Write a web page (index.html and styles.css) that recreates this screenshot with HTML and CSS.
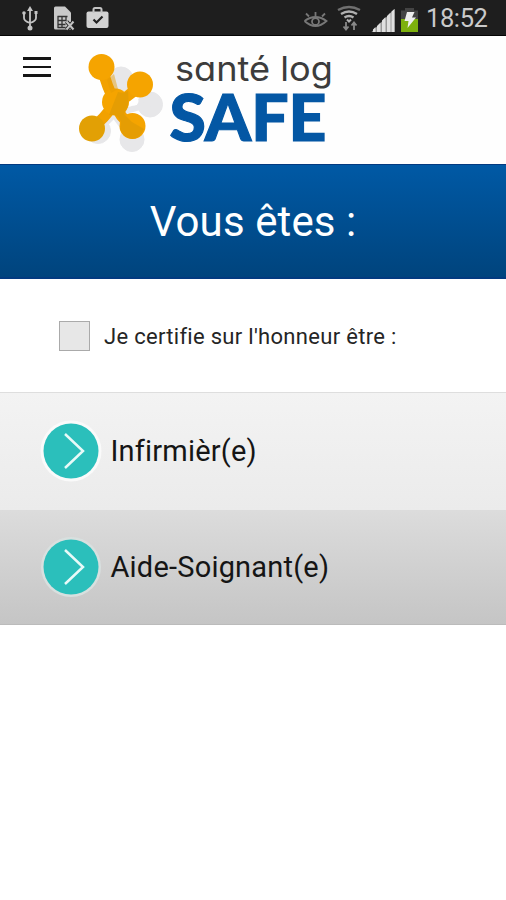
FILE: index.html
```html
<!DOCTYPE html>
<html lang="fr">
<head>
<meta charset="utf-8">
<meta name="viewport" content="width=device-width">
<title>Santé log SAFE</title>
<link rel="stylesheet" href="styles.css">
</head>
<body>
<div class="statusbar">
  <svg class="status-left" width="120" height="36" viewBox="0 0 120 36" fill="none" stroke="#c4c4c4">
    <path d="M30 9v19M24 13v5q0 3 6 5M36 13v5q0 3-6 5" stroke-width="1.8"/>
    <path d="M30 6l3 5h-6z" fill="#c4c4c4" stroke="none"/>
    <circle cx="24" cy="13" r="1.8" fill="#c4c4c4" stroke="none"/>
    <path d="M34.500 11h3v3h-3z" fill="#c4c4c4" stroke="none"/>
    <circle cx="30" cy="28" r="2.500" fill="#c4c4c4" stroke="none"/>
    <path d="M54 8q0-1.500 1.500-1.500H65l6 6V29.500H55.500q-1.500 0-1.500-1.500z" fill="#c9c9c9" stroke="none"/>
    <path d="M57.500 16.500h10M57.500 20.500h9M57.500 24.500h8M57.500 27.500h8M58 16v12M62 16v12M66 16v5" stroke="#333" stroke-width="1.300"/>
    <path d="M66.500 21.500l7 8M73.500 21.500l-7 8" stroke="#222" stroke-width="4"/>
    <path d="M66.500 21.500l7 8M73.500 21.500l-7 8" stroke-width="2"/>
    <rect x="86.500" y="11.500" width="22" height="16.500" rx="2" fill="#d2d2d2" stroke="none"/>
    <path d="M93.500 13V9.500q0-1.500 1.500-1.500h5q1.500 0 1.500 1.500V13" stroke-width="2"/>
    <path d="M93.500 19.500l3 3 6-6" stroke="#222" stroke-width="2.200"/>
  </svg>
  <svg class="status-right" width="120" height="36" viewBox="302 0 120 36" fill="none">
    <g stroke="#777" stroke-width="1.800">
      <path d="M304.500 21q11-8 22 0q-11 10-22 0M315.500 16v-4M309 16.500l-3-3M322 16.500l3-3"/>
      <circle cx="315.500" cy="21.500" r="3.500"/>
    </g>
    <g stroke="#b0b0b0" stroke-width="2.400">
      <path d="M338 10q11-6 22 0" stroke="#707070"/>
      <path d="M341 14q8-5 16 0M344.500 17.500q4.500-3 9 0"/>
      <path d="M347 19.500l2 2 2-2" stroke-width="2"/>
    </g>
    <path d="M346 22v7M343.500 26.500l2.500 3 2.500-3M354 30v-7M351.500 25.500l2.500-3 2.500 3" stroke="#888" stroke-width="1.800"/>
    <path d="M371.500 32L394.500 9v23z" fill="#999"/>
    <path d="M373 32v-2.500l2.500-2.500v5zM377 32v-6l3.500-3.500V32zM382 32V20.500l3.500-3.500v15zM387 32V16l3.500-3.500V32zM391.500 32V11.500l3-2.500v23z" fill="#e0e0e0"/>
    <path d="M401 10.500h4V8h9v2.500h4V32h-17z" fill="#444"/>
    <path d="M401 19h17v13h-17z" fill="#7db00d"/>
    <path d="M407 12h7.500l-2.500 5.500h4L407.500 28l1-7h-4z" fill="#eee"/>
  </svg>
  <span class="clock">18:52</span>
</div>
<header class="header">
  <div class="menu"><i></i><i></i><i></i></div>
  <svg class="logo" width="260" height="110" viewBox="76 48 260 110">
    <g fill="#e7e7e9" stroke="#e7e7e9">
      <circle cx="121" cy="79" r="12"/><circle cx="150" cy="104.500" r="12.500"/>
      <circle cx="132" cy="139.500" r="12"/><circle cx="98" cy="131" r="12.500"/>
      <path d="M121 79L112 115L150 104M98 131L114 115L132 139" fill="none" stroke-width="6"/>
    </g>
    <circle cx="134" cy="101" r="4.500" fill="#fff"/>
    <path d="M102 67Q107 88 115 102Q127 99 140 85M92 128Q104 119 115 103Q119 117 132 126" fill="none" stroke="#f2a100" stroke-width="11"/>
    <g fill="#f5a400">
      <circle cx="101.500" cy="67" r="13"/><circle cx="140" cy="84.500" r="13"/>
      <circle cx="115.500" cy="102" r="13.500"/><circle cx="132.500" cy="126" r="13"/>
    </g>
    <circle cx="92" cy="128.500" r="13" fill="#e2a005"/>
    <path d="M109 115L118 92Q124 94 128 91Q130 108 124 114Q127 117 132 122L144 129Q140 139 132 139Q123 138 120 129Q123 119 115 115Z" fill="#e29c04" opacity=".85"/>
    <path d="M107 80l7-6 4 15-7 4z" fill="#e49b02" opacity=".45"/>
    <text class="word-top" x="175" y="81" textLength="158" lengthAdjust="spacingAndGlyphs">santé log</text>
    <text class="word-bottom" x="169.500" y="140.500" textLength="157" lengthAdjust="spacingAndGlyphs">SAFE</text>
  </svg>
</header>
<h1 class="title"><span>Vous êtes :</span></h1>
<label class="certify"><span class="checkbox"></span><span class="certify-text">Je certifie sur l'honneur être :</span></label>
<div class="row row-light">
  <svg class="arrow" width="64" height="64" viewBox="0 0 64 64"><circle cx="32" cy="32" r="30.500"/><circle class="disc" cx="32" cy="32" r="27.500"/><path d="M26 15l18 17-18 17"/></svg>
  <span class="infirmier">Infirmièr(e)</span>
</div>
<div class="row row-dark">
  <svg class="arrow" width="64" height="64" viewBox="0 0 64 64"><circle cx="32" cy="32" r="30"/><circle class="disc" cx="32" cy="32" r="27.500"/><path d="M26 15l18 17-18 17"/></svg>
  <span class="aide">Aide-Soignant(e)</span>
</div>
</body>
</html>
```

FILE: styles.css
```css
* { box-sizing: border-box; }
body {
  margin: 0;
  background: #fff;
  color: #151515;
  font-family: Roboto, "Liberation Sans", sans-serif;
}
.statusbar {
  display: flex;
  align-items: center;
  height: 36px;
  background: #1e1e1e;
  border-bottom: 1px solid #050505;
}
.status-right { margin-left: 182px; }
.clock {
  margin-left: 4px;
  color: #cacaca;
  font-size: 25.5px;
  letter-spacing: -0.4px;
  line-height: 36px;
  white-space: nowrap;
}
.header {
  display: flex;
  height: 128px;
  background: #fefefe;
}
.menu {
  display: flex;
  flex-direction: column;
  gap: 6px;
  width: 28px;
  margin: 21px 25px 0 23px;
}
.menu i { height: 2.5px; background: #151515; }
.logo { margin-top: 12px; }
.word-top {
  font-family: Inter, sans-serif;
  font-size: 34px;
  font-weight: 400;
  font-feature-settings: "cv11";
  fill: #3c3c3c;
}
.word-bottom {
  font-family: Lato, sans-serif;
  font-size: 65px;
  font-weight: 900;
  fill: #0457a4;
  stroke: #0457a4;
  stroke-width: 1.2px;
}
.title {
  height: 115px;
  margin: 0;
  border: solid #033a80;
  border-width: 1px 0 2px;
  background: linear-gradient(#0059a5, #00447d);
  color: #fff;
  font-size: 42px;
  font-weight: 400;
  line-height: 113px;
  text-align: center;
  letter-spacing: 0.1px;
}
.certify {
  display: flex;
  align-items: center;
  height: 113px;
  padding-left: 59px;
  color: #252525;
  font-size: 22px;
  letter-spacing: 0.3px;
}
.checkbox {
  width: 31px;
  height: 30px;
  margin-right: 14px;
  border: 1px solid #aaa;
  background: #e7e7e7;
}
.certify-text { padding-top: 2px; }
.row {
  display: flex;
  align-items: center;
  padding-left: 39px;
  font-size: 29px;
  letter-spacing: 0.2px;
}
.row span { margin-left: 7.5px; }
.row-light {
  height: 118px;
  padding-bottom: 2px;
  border-top: 1px solid #dedede;
  background: linear-gradient(#f3f3f3, #ebebeb);
}
.row-dark {
  height: 115px;
  padding-bottom: 1px;
  border-bottom: 1px solid #bbb;
  background: linear-gradient(#dcdcdc, #c5c5c5);
}
.arrow { fill: #fafafa; }
.row-dark .arrow { fill: #d8e0df; }
.arrow .disc { fill: #2bbfbb; }
.arrow path { fill: none; stroke: #e8faf8; stroke-width: 2.5; }
```
